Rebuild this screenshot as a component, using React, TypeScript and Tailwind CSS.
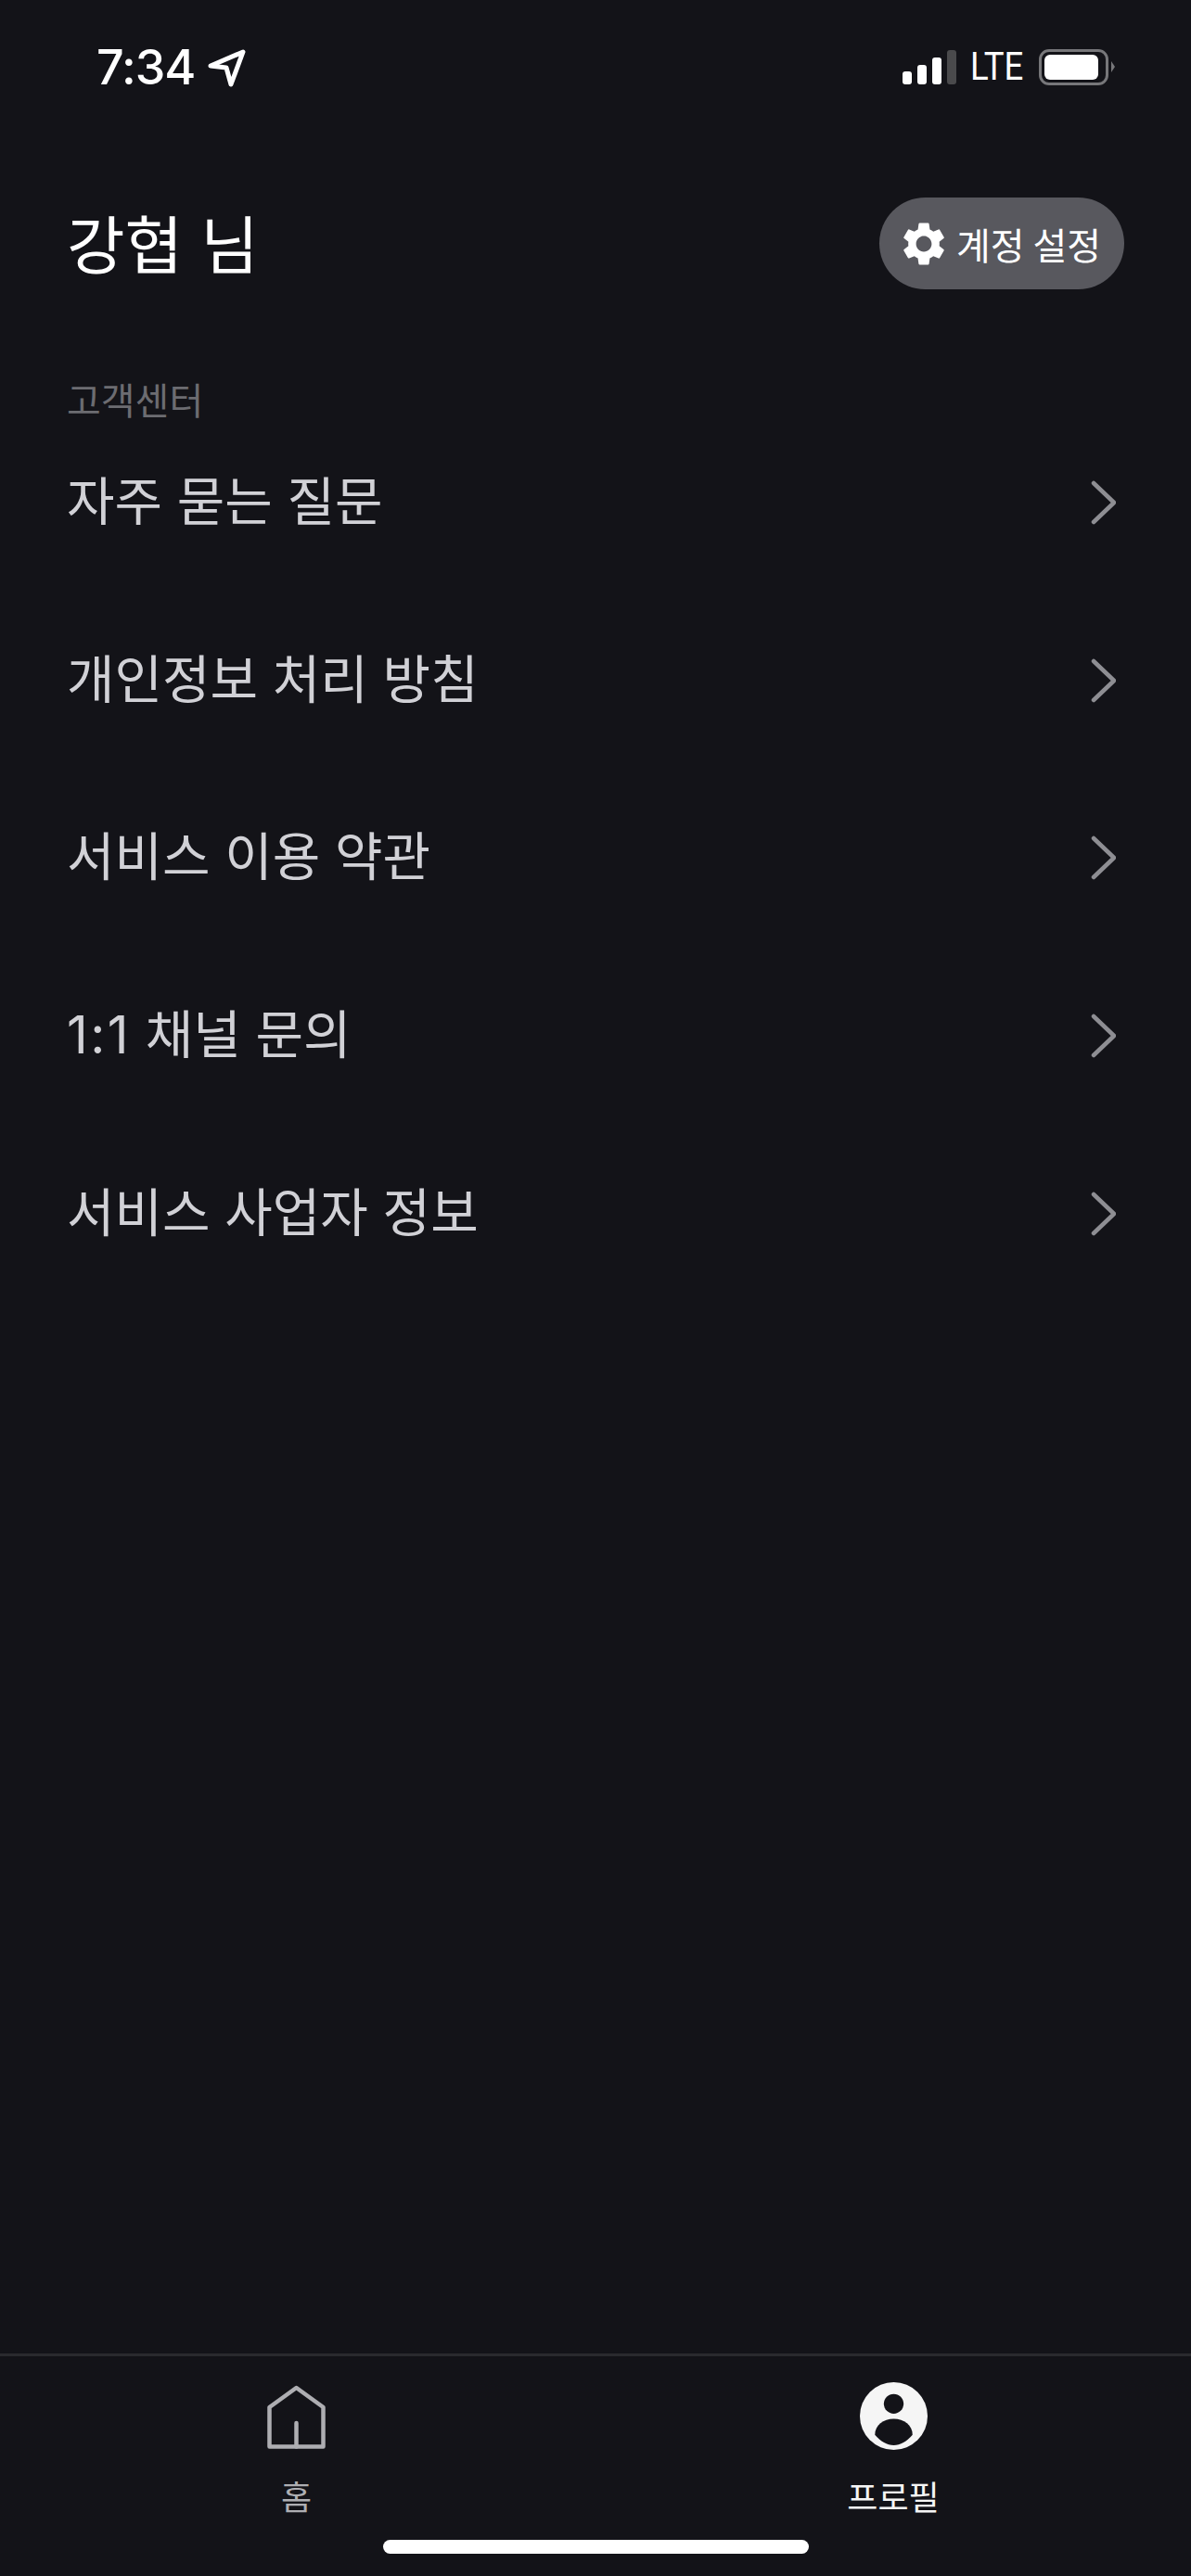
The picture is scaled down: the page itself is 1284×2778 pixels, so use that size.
import { MdSettings } from 'react-icons/md'

const KR = "font-['Noto_Sans_CJK_KR','Noto_Sans',sans-serif]"

const menuItems = [
  { label: '자주 묻는 질문' },
  { label: '개인정보 처리 방침' },
  { label: '서비스 이용 약관' },
  { prefix: '1:1', label: ' 채널 문의' },
  { label: '서비스 사업자 정보' },
]

function StatusBar() {
  return (
    <div className="flex h-[144px] items-center justify-between pl-[104px] pr-[82px]">
      <div className="flex items-center gap-[14px] pt-[2px]">
        <span className="font-['Inter',sans-serif] text-[52px] leading-none font-medium tracking-[-1px] text-white">7:34</span>
        <svg width="42" height="42" viewBox="0 0 42 42" fill="none" stroke="#fff" strokeWidth="5" strokeLinecap="round" strokeLinejoin="round">
          <path d="M3 19 38 4 25 39 20 21Z" />
        </svg>
      </div>
      <div className="flex items-center">
        <div className="flex items-end gap-[6px] pt-[1px]">
          <div className="h-[14px] w-[10px] rounded-[3px] bg-white" />
          <div className="h-[21px] w-[10px] rounded-[3px] bg-white" />
          <div className="h-[29px] w-[10px] rounded-[3px] bg-white" />
          <div className="h-[37px] w-[10px] rounded-[3px] bg-[#4a4a4c]" />
        </div>
        <span className="ml-[15px] w-[61px] origin-left scale-x-[0.87] font-['Roboto',sans-serif] text-[42px] leading-none text-white">LTE</span>
        <div className="ml-[13px] flex h-[39px] w-[75px] items-center justify-start rounded-[11px] border-[3px] border-[#77777a] pl-[3px]">
          <div className="h-[27px] w-[58px] rounded-[6px] bg-white" />
        </div>
        <svg width="4" height="12" viewBox="0 0 4 12" className="ml-[3px]">
          <path d="M0 0 4 6 0 12Z" fill="#77777a" />
        </svg>
      </div>
    </div>
  )
}

function Chevron() {
  return (
    <svg width="27" height="48" viewBox="0 0 27 48" fill="none" stroke="#8e8e93" strokeWidth="4.5" strokeLinecap="round" strokeLinejoin="round" className="mt-[7px]">
      <path d="M3 3 25 24 3 45" />
    </svg>
  )
}

function HomeIcon() {
  return (
    <svg width="63" height="69" viewBox="0 0 63 69" fill="none" stroke="#aeaeb2" strokeWidth="4.5" strokeLinecap="round" strokeLinejoin="round" className="mt-[3px]">
      <path d="M2.5 24 31.5 3 60.5 24V66.5H2.5Z" />
      <path d="M31.5 41V66.5" />
    </svg>
  )
}

function ProfileIcon() {
  return (
    <svg width="73" height="73" viewBox="0 0 72 72">
      <circle cx="36" cy="36" r="36" fill="#f5f5f5" />
      <circle cx="36" cy="23" r="10.5" fill="#131318" />
      <path d="M16 56C16 46 25 39 36 39S56 46 56 56C50 63 43 67 36 67S22 63 16 56Z" fill="#131318" />
    </svg>
  )
}

export default function App() {
  return (
    <div className={`flex h-[2778px] w-[1284px] flex-col bg-[#131318] ${KR}`}>
      <StatusBar />

      <div className="mt-[69px] flex items-center justify-between pl-[72px] pr-[72px]">
        <h1 className="pt-[4px] font-['Inter','Noto_Sans_CJK_KR',sans-serif] text-[68px] leading-[94px] font-normal text-white">강협 님</h1>
        <button type="button" className="flex h-[99px] w-[264px] items-center justify-start gap-[7px] rounded-full bg-[#58585e] pl-[20px] text-white">
          <MdSettings size={56} />
          <span className="text-[40px] leading-none">계정 설정</span>
        </button>
      </div>

      <div className="mt-[104px] pl-[72px] text-[40px] leading-[28px] text-[#6c6c71]">고객센터</div>

      <div className="flex-1">
        {menuItems.map((item) => (
          <div key={item.label} className="flex h-[191.8px] items-center justify-between pb-[3px] pl-[72px] pr-[81px]">
            <span className="mt-[5px] font-['Inter','Noto_Sans_CJK_KR',sans-serif] text-[56px] leading-none whitespace-pre text-[#d1d1d6]">
              {item.prefix && <span className="tracking-[2.4px]">{item.prefix}</span>}
              {item.label}
            </span>
            <Chevron />
          </div>
        ))}
      </div>

      <div className="flex h-[240px] flex-col border-t-[3px] border-[#2a2a2e]">
        <div className="grid grid-cols-2 pt-[28px]">
          <div className="flex flex-col items-center gap-[27px] pr-[3px]">
            <HomeIcon />
            <span className="text-[36px] leading-[46px] text-[#aeaeb2]">홈</span>
          </div>
          <div className="flex flex-col items-center gap-[26px]">
            <ProfileIcon />
            <span className="text-[36px] leading-[46px] text-[#f5f5f5]">프로필</span>
          </div>
        </div>
        <div className="mt-[25px] flex justify-center">
          <div className="h-[15px] w-[459px] rounded-full bg-white" />
        </div>
      </div>
    </div>
  )
}
